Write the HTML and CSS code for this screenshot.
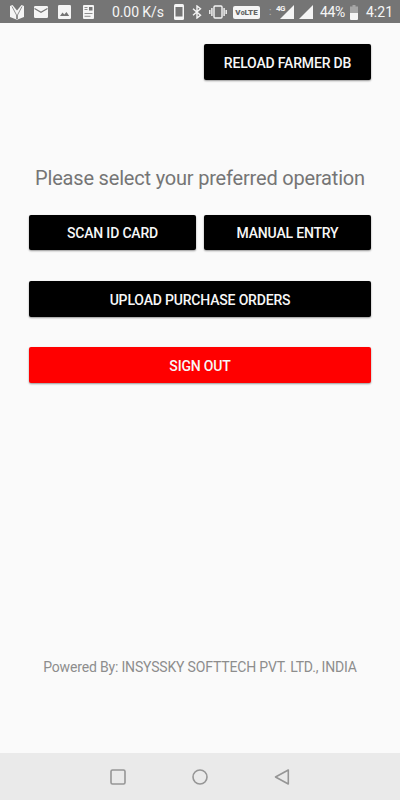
FILE: index.html
```html
<!DOCTYPE html>
<html lang="en">
  <head>
    <meta charset="UTF-8" />
    <meta name="viewport" content="width=device-width, initial-scale=1.0" />
    <title>Select operation</title>
    <link rel="stylesheet" href="styles.css">
  </head>
  <body>
    <!-- Status bar -->
    <header class="status-bar">
      <div class="status-group notifications">
        <svg class="icon" width="16" height="16" viewBox="0 0 16 16">
          <path d="M1 2l2.500-1L8 6.500 12.500 1 15 2v11l-7 2.800L1 13z" />
          <path class="cut thin" d="M3 2.500l4.500 8.500v4M13 2.500L8.500 11v4" />
        </svg>
        <svg class="icon mail" width="14" height="12" viewBox="0 0 14 12">
          <rect width="14" height="12" rx="1.200" />
          <path class="cut" d="M.5 2.500L7 6.300l6.500-3.800" />
        </svg>
        <svg class="icon photo" width="13" height="14" viewBox="0 0 13 14">
          <rect width="13" height="14" rx="1.300" />
          <path class="hole" d="M2 11l2.500-3.500 1.800 2L8.500 7l2.700 4z" />
        </svg>
        <svg class="icon news" width="11" height="14" viewBox="0 0 11 14">
          <rect width="11" height="14" rx="1" />
          <path class="cut thin" d="M1.500 2.500h3M1.500 4.500h3M1.500 8.500h8M1.500 11.300h6" />
          <rect class="hole" x="6" y="2" width="3.500" height="3.500" />
        </svg>
      </div>
      <span class="speed">0.00 K/s</span>
      <div class="status-group system">
        <svg class="icon phone" width="10" height="16" viewBox="0 0 10 16">
          <rect width="10" height="16" rx="1.500" />
          <rect class="hole" x="1.500" y="3" width="7" height="9.500" />
        </svg>
        <svg class="icon line bluetooth" width="10" height="14" viewBox="0 0 10 14">
          <path d="M1 3.700l7.500 6.500L5 13V1l3.500 2.800L1 10.300" />
        </svg>
        <svg class="icon line vibrate" width="18" height="14" viewBox="0 0 18 14">
          <rect x="5" y="1" width="8" height="12" rx="1" />
          <path d="M2.900 3v8M.8 5v4M15.100 3v8M17.200 5v4" />
        </svg>
        <span class="volte">V<small>o</small>LTE</span>
        <span class="dots">:</span>
        <span class="network">4G</span>
        <svg class="icon signal" width="14" height="14" viewBox="0 0 14 14"><path d="M14 0v14H0z" /></svg>
        <svg class="icon signal-two" width="14" height="14" viewBox="0 0 14 14"><path d="M14 0v14H0z" /></svg>
        <span class="percent">44%</span>
        <svg class="icon battery" width="8" height="15" viewBox="0 0 8 15">
          <path class="empty" d="M2.500 0h3v1.500H8V8H0V1.500h2.500z" />
          <path d="M0 8h8v6q0 1-1 1H1q-1 0-1-1z" />
        </svg>
        <span class="clock">4:21</span>
      </div>
    </header>

    <main class="content">
      <button class="btn reload">RELOAD FARMER DB</button>
      <h1 class="title">Please select your preferred operation</h1>
      <div class="row">
        <button class="btn">SCAN ID CARD</button>
        <button class="btn">MANUAL ENTRY</button>
      </div>
      <button class="btn upload">UPLOAD PURCHASE ORDERS</button>
      <button class="btn sign-out">SIGN OUT</button>
      <footer class="powered">Powered By: INSYSSKY SOFTTECH PVT. LTD., INDIA</footer>
    </main>

    <!-- Navigation bar -->
    <nav class="nav-bar">
      <svg class="nav-icon" viewBox="0 0 18 18"><rect x="2" y="2" width="14" height="14" rx="1.500" /></svg>
      <svg class="nav-icon" viewBox="0 0 18 18"><circle cx="9" cy="9" r="7" /></svg>
      <svg class="nav-icon" viewBox="0 0 18 18"><path d="M15.300 2v14L2.500 9z" /></svg>
    </nav>
  </body>
</html>
```

FILE: styles.css
```css
:root {
  --bar: #757575;
  --page: #fafafa;
  --light: #f5f5f5;
}

* {
  box-sizing: border-box;
  margin: 0;
  padding: 0;
}
body {
  height: 100vh;
  display: flex;
  flex-direction: column;
  overflow: hidden;
  background: var(--page);
  font-family: Roboto, sans-serif;
}

/* Status bar */
.status-bar {
  display: flex;
  align-items: center;
  height: 23px;
  padding: 1px 8px 0 9px;
  background: var(--bar);
  color: var(--light);
  font-size: 14px;
  line-height: 22px;
  white-space: nowrap;
}
.status-group {
  display: flex;
  align-items: center;
}
.icon {
  display: block;
  flex: none;
  fill: var(--light);
}
.line {
  fill: none;
  stroke: var(--light);
  stroke-width: 1.4;
}
.cut {
  fill: none;
  stroke: var(--bar);
  stroke-width: 1.2;
}
.thin {
  stroke-width: 0.8;
}
.hole {
  fill: var(--bar);
}
.empty {
  fill: #a5a5a5;
}
.mail {
  margin-left: 9px;
}
.photo {
  margin-left: 10px;
}
.news {
  margin-left: 12px;
}
.speed {
  margin-left: 18px;
  letter-spacing: -0.1px;
}
.system {
  margin-left: auto;
}
.bluetooth {
  margin-left: 8px;
}
.vibrate {
  margin-left: 7px;
}
.volte {
  width: 27px;
  height: 13px;
  margin-left: 6px;
  border-radius: 2px;
  background: var(--light);
  color: #666;
  font-size: 8px;
  font-weight: 900;
  line-height: 13px;
  text-align: center;
}
.volte small {
  font-size: 7px;
}
.dots {
  width: 4px;
  margin-left: 9px;
  opacity: 0.5;
  font-size: 10px;
}
.network {
  width: 10px;
  margin-left: 3px;
  font-size: 8px;
  font-weight: 700;
  line-height: 8px;
  letter-spacing: -0.5px;
  align-self: flex-start;
  padding-top: 4px;
}
.signal {
  margin-left: -6px;
}
.signal-two {
  margin-left: 5px;
}
.percent {
  width: 26px;
  margin-left: 7px;
  font-size: 14px;
  letter-spacing: -0.4px;
}
.battery {
  margin-left: 4px;
}
.clock {
  width: 26px;
  margin-left: 8px;
}

/* Main screen */
.content {
  flex: 1;
  display: flex;
  flex-direction: column;
  padding: 21px 29px 0;
}
.btn {
  height: 35px;
  flex: none;
  padding-top: 2px;
  border: 0;
  border-radius: 2px;
  background: #000;
  color: #f7f7f7;
  box-shadow: 0 1px 2px rgba(0, 0, 0, 0.4);
  font-family: inherit;
  font-size: 14px;
  font-weight: 500;
  line-height: 33px;
  letter-spacing: -0.18px;
}
.reload,
.upload,
.sign-out {
  height: 36px;
  padding-top: 3px;
}
.reload {
  width: 167px;
  align-self: flex-end;
}
.title {
  margin-top: 86px;
  color: #757575;
  font-size: 20px;
  font-weight: 400;
  line-height: 24px;
  letter-spacing: -0.19px;
  text-align: center;
  white-space: nowrap;
}
.row {
  display: grid;
  grid-template-columns: 1fr 1fr;
  gap: 8px;
  margin: 25px 0 31px;
}
.sign-out {
  margin-top: 30px;
  background: #f00;
}
.powered {
  margin: auto 0 77px;
  color: #8d8d8d;
  font-size: 14px;
  line-height: 18px;
  letter-spacing: -0.17px;
  text-align: center;
  white-space: nowrap;
}

/* Navigation bar */
.nav-bar {
  display: flex;
  justify-content: center;
  align-items: center;
  gap: 64px;
  height: 47px;
  background: #eaeaea;
}
.nav-icon {
  width: 18px;
  height: 18px;
  fill: none;
  stroke: #969696;
  stroke-width: 1.6;
  stroke-linejoin: round;
}
```
